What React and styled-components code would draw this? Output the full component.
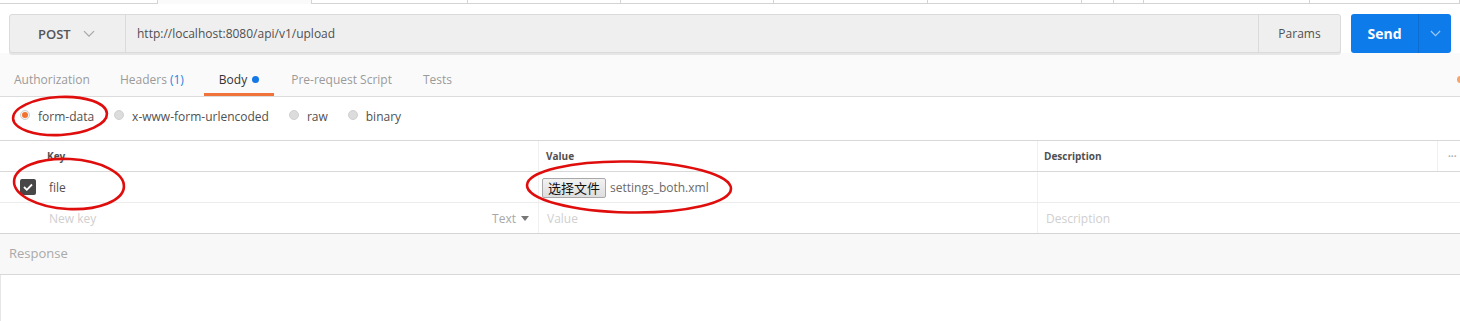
import React from "react";
import styled, { createGlobalStyle } from "styled-components";

const Global = createGlobalStyle`
  html, body { margin: 0; padding: 0; background: #fff; }
  body { font-family: "Open Sans", "Liberation Sans", sans-serif; overflow: hidden; }
  * { box-sizing: border-box; }
`;

const Page = styled.div`
  position: relative;
  width: 1460px;
  height: 321px;
  overflow: hidden;
  background: #fff;
`;

const TopStrip = styled.div`
  display: flex;
  height: 4px;
`;

const StripTab = styled.div`
  width: ${(p) => p.w}px;
  height: 4px;
  border-bottom: ${(p) => (p.active ? "none" : "1px solid #d4d4d4")};
  border-right: 1px solid #d4d4d4;
  background: ${(p) => (p.active ? "#fafafa" : "#fff")};
`;

const RequestRow = styled.div`
  display: flex;
  gap: 10px;
  padding: 10px 9px 0 9px;
  height: 49px;
`;

const UrlBar = styled.div`
  flex: 1;
  display: flex;
  height: 39px;
  border: 1px solid #dadada;
  border-radius: 3px;
  background: #efefef;
  box-shadow: 0 2px 0 #e6e6e6;
`;

const Method = styled.div`
  width: 116px;
  display: flex;
  align-items: center;
  padding-left: 28px;
  gap: 12px;
  border-right: 1px solid #dadada;
  font-size: 13px;
  font-weight: 600;
  color: #555;
`;

const UrlText = styled.div`
  flex: 1;
  display: flex;
  align-items: center;
  padding-left: 11px;
  font-size: 12px;
  color: #505050;
`;

const ParamsBtn = styled.div`
  width: 82px;
  display: flex;
  align-items: center;
  justify-content: center;
  border-left: 1px solid #dadada;
  font-size: 12px;
  color: #505050;
`;

const SendBtn = styled.div`
  width: 100px;
  height: 39px;
  display: flex;
  border-radius: 3px;
  background: #0e7bea;
  color: #fff;
`;

const SendLabel = styled.div`
  flex: 1;
  display: flex;
  align-items: center;
  justify-content: center;
  font-size: 14px;
  font-weight: 700;
  border-right: 1px solid #0b6dd2;
`;

const SendArrow = styled.div`
  width: 32px;
  display: flex;
  align-items: center;
  justify-content: center;
`;

const TabsRow = styled.div`
  display: flex;
  align-items: stretch;
  height: 44px;
  background: #fafafa;
  border-bottom: 1px solid #dcdcdc;
`;

const Tab = styled.div`
  display: flex;
  align-items: center;
  gap: 5px;
  padding: 12px 15px 0 15px;
  margin-left: ${(p) => p.ml || 0}px;
  font-size: 12px;
  color: ${(p) => (p.active ? "#333" : "#9a9a9a")};
  border-bottom: 3px solid ${(p) => (p.active ? "#f0733c" : "transparent")};
`;

const Count = styled.span`
  color: #1f82e6;
  margin-left: 3px;
`;

const Dot = styled.span`
  width: 7px;
  height: 7px;
  border-radius: 50%;
  background: ${(p) => p.color};
  display: inline-block;
`;

const EdgeDot = styled.span`
  margin-left: auto;
  margin-right: -4px;
  align-self: center;
  margin-top: 10px;
  width: 7px;
  height: 7px;
  border-radius: 50%;
  background: #f3a66f;
`;

const BodyTypes = styled.div`
  display: flex;
  align-items: center;
  height: 44px;
  padding: 0 0 4px 20px;
  gap: 20px;
  border-bottom: 1px solid #d8d8d8;
`;

const RadioItem = styled.label`
  display: flex;
  align-items: center;
  gap: 8px;
  font-size: 12px;
  color: #505050;
`;

const Radio = styled.span`
  width: 10px;
  height: 10px;
  border-radius: 50%;
  margin-top: -4px;
  background: ${(p) => (p.on ? "#f7f7f7" : "#dcdcdc")};
  border: 1px solid #d0d0d0;
  display: flex;
  align-items: center;
  justify-content: center;
  &::after {
    content: "";
    width: 6px;
    height: 6px;
    border-radius: 50%;
    background: ${(p) => (p.on ? "#f2732f" : "transparent")};
  }
`;

const Table = styled.div`
  display: flex;
  flex-direction: column;
  border-bottom: 1px solid #d4d4d4;
`;

const Row = styled.div`
  display: grid;
  grid-template-columns: 40px 498px 499px 400px 23px;
  height: ${(p) => p.h}px;
  border-bottom: ${(p) => (p.line ? `1px solid ${p.line}` : "none")};
`;

const Cell = styled.div`
  display: flex;
  align-items: center;
  padding-left: ${(p) => p.pl ?? 8}px;
  padding-right: ${(p) => p.pr ?? 0}px;
  border-left: ${(p) => (p.divider ? "1px solid #f0f0f0" : "none")};
  font-size: ${(p) => (p.head ? 10 : 12)}px;
  font-weight: ${(p) => (p.head ? 700 : 400)};
  color: ${(p) => p.color || "#505050"};
  justify-content: ${(p) => p.justify || "flex-start"};
  white-space: nowrap;
`;

const Check = styled.span`
  width: 16px;
  height: 16px;
  border-radius: 2px;
  background: #474747;
  display: flex;
  align-items: center;
  justify-content: center;
`;

const FileButton = styled.span`
  height: 20px;
  padding: 0 5px;
  display: inline-flex;
  align-items: center;
  border: 1px solid #a9a9a9;
  border-radius: 2px;
  background: linear-gradient(#f2f2f2, #dedede);
  font-family: "Noto Sans CJK SC", sans-serif;
  font-size: 13px;
  color: #111;
  margin-right: 4px;
  margin-top: 1px;
`;

const FileName = styled.span`
  font-size: 12px;
  color: #6a6a6a;
`;

const Placeholder = styled.span`
  color: #cfcfcf;
  font-size: 12px;
`;

const TypeSel = styled.span`
  display: flex;
  align-items: center;
  gap: 5px;
  color: #a8a8a8;
  font-size: 12px;
`;

const ResponseBar = styled.div`
  height: 41px;
  display: flex;
  align-items: center;
  padding-left: 9px;
  padding-bottom: 2px;
  background: #f8f8f8;
  border-bottom: 1px solid #d8d8d8;
  font-size: 13px;
  color: #a9a9a9;
`;

const ResponseBody = styled.div`
  height: 48px;
  border-left: 1px solid #e6e6e6;
`;

const Annotations = styled.svg`
  position: absolute;
  left: 0;
  top: 0;
  pointer-events: none;
`;

const Chevron = ({ color, size = 12 }) => (
  <svg width={size} height={size * 0.6} viewBox="0 0 12 7">
    <path d="M1 1l5 5 5-5" fill="none" stroke={color} strokeWidth="1.3" />
  </svg>
);

const stripWidths = [158, 154, 156, 153, 153, 154, 154, 32, 30, 166, 150];

export default function App() {
  return (
    <Page>
      <Global />
      <TopStrip>
        {stripWidths.map((w, i) => (
          <StripTab key={i} w={w} active={i === 1} />
        ))}
      </TopStrip>
      <RequestRow>
        <UrlBar>
          <Method>
            POST <Chevron color="#a8a8a8" />
          </Method>
          <UrlText>http://localhost:8080/api/v1/upload</UrlText>
          <ParamsBtn>Params</ParamsBtn>
        </UrlBar>
        <SendBtn>
          <SendLabel>Send</SendLabel>
          <SendArrow>
            <Chevron color="#9cc8f5" size={11} />
          </SendArrow>
        </SendBtn>
      </RequestRow>
      <TabsRow>
        <Tab ml={-1}>Authorization</Tab>
        <Tab ml={0}>
          <span>
            Headers<Count>(1)</Count>
          </span>
        </Tab>
        <Tab ml={5} active>
          Body <Dot color="#1478e6" />
        </Tab>
        <Tab ml={2}>Pre-request Script</Tab>
        <Tab ml={1}>Tests</Tab>
        <EdgeDot />
      </TabsRow>
      <BodyTypes>
        <RadioItem>
          <Radio on />
          form-data
        </RadioItem>
        <RadioItem>
          <Radio />
          x-www-form-urlencoded
        </RadioItem>
        <RadioItem>
          <Radio />
          raw
        </RadioItem>
        <RadioItem>
          <Radio />
          binary
        </RadioItem>
      </BodyTypes>
      <Table>
        <Row h={31} line="#d8d8d8">
          <Cell />
          <Cell pl={7} head>Key</Cell>
          <Cell pl={7} head divider>Value</Cell>
          <Cell pl={6} head divider>Description</Cell>
          <Cell pl={10} head divider color="#b0b0b0">···</Cell>
        </Row>
        <Row h={31} line="#ececec">
          <Cell pl={20}>
            <Check>
              <svg width="10" height="8" viewBox="0 0 10 8">
                <path d="M1 4l2.8 2.8L9 1.5" fill="none" stroke="#fff" strokeWidth="1.8" />
              </svg>
            </Check>
          </Cell>
          <Cell pl={9}>file</Cell>
          <Cell pl={3} divider>
            <FileButton>选择文件</FileButton>
            <FileName>settings_both.xml</FileName>
          </Cell>
          <Cell divider />
          <Cell />
        </Row>
        <Row h={30}>
          <Cell />
          <Cell pl={9} pr={9} justify="space-between">
            <Placeholder>New key</Placeholder>
            <TypeSel>
              Text
              <svg width="8" height="5" viewBox="0 0 8 5">
                <path d="M0 0h8L4 5z" fill="#777" />
              </svg>
            </TypeSel>
          </Cell>
          <Cell divider>
            <Placeholder>Value</Placeholder>
          </Cell>
          <Cell divider>
            <Placeholder>Description</Placeholder>
          </Cell>
          <Cell />
        </Row>
      </Table>
      <ResponseBar>Response</ResponseBar>
      <ResponseBody />
      <Annotations width="1460" height="321" viewBox="0 0 1460 321">
        <g fill="none" stroke="#e00d0d" strokeWidth="2.6">
          <ellipse cx="60" cy="116" rx="47" ry="19" transform="rotate(-3 60 116)" />
          <ellipse cx="69" cy="184" rx="55" ry="25" transform="rotate(3 69 184)" />
          <ellipse cx="629" cy="187" rx="102" ry="25.5" transform="rotate(1 629 187)" />
        </g>
      </Annotations>
    </Page>
  );
}
